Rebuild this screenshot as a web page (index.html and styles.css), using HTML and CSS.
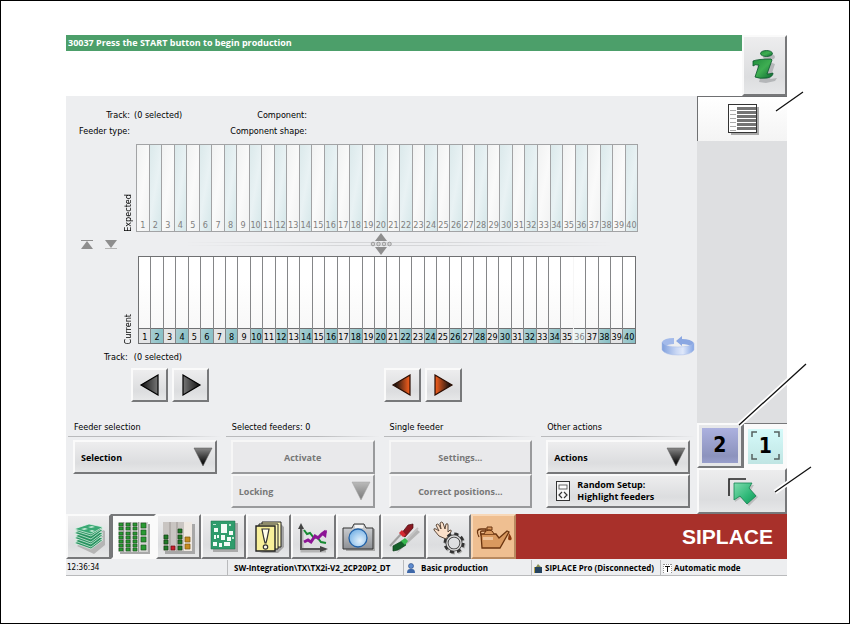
FILE: index.html
```html
<!DOCTYPE html>
<html lang="en">

<head>
    <meta charset="UTF-8">
    <meta name="viewport" content="width=device-width, initial-scale=1.0">
    <title>SIPLACE Station</title>
    <link rel="stylesheet" href="styles.css">
</head>

<body>
    <div class="app">
        <header class="header">
            <div class="message">30037 Press the START button to begin production</div>
            <button class="info-button" aria-label="Information">
                <svg width="44" height="60" viewBox="0 0 44 60">
                    <defs>
                        <linearGradient id="infoGreen" x1="0" y1="0" x2="1" y2="1">
                            <stop offset="0" stop-color="#1f8d3c" />
                            <stop offset="0.5" stop-color="#3fae52" />
                            <stop offset="1" stop-color="#0b6a30" />
                        </linearGradient>
                    </defs>
                    <g fill="#a3a5a8" opacity="0.7" transform="translate(3 3)">
                        <ellipse cx="23" cy="18" rx="6" ry="3.2" />
                        <path d="M11 26l15-2 3 1-5 15 7-1-2 3-9 2-7-1 4-14-5 1z" />
                    </g>
                    <ellipse cx="23.500" cy="17.500" rx="6" ry="3" fill="url(#infoGreen)" stroke="#07552a" stroke-width="0.800" />
                    <path d="M10 25q5-2 18-2l1 1-5 14q3 0 6-1 0 4-6 5-8 1-12-1l4-12q-4-1-6 1z" fill="url(#infoGreen)" stroke="#07552a" stroke-width="0.800" />
                </svg>
            </button>
        </header>

        <div class="middle">
            <main class="content">
                <dl class="details">
                    <dt>Track:</dt>
                    <dd>(0 selected)</dd>
                    <dt>Component:</dt>
                    <dd></dd>
                    <dt>Feeder type:</dt>
                    <dd></dd>
                    <dt>Component shape:</dt>
                    <dd></dd>
                </dl>

                <div class="tracks">
                    <span class="side-label">Expected</span>
                    <div class="slots expected" id="expected"></div>

                    <div class="splitter">
                        <svg class="splitter-ends" width="38" height="12" viewBox="0 0 38 12">
                            <path d="M1 2h12v1H1zM1 11l6-8 6 8z" fill="#8e8e8e" />
                            <path d="M25 2h12l-6 8z" fill="#8e8e8e" />
                            <path d="M25 10h12v1H25z" fill="#b5b5b5" />
                        </svg>
                        <div class="splitter-line"></div>
                        <svg class="splitter-grip" width="22" height="22" viewBox="0 0 22 22">
                            <path d="M11 0l6 8H5zM5 14h12l-6 8z" fill="#8e8e8e" />
                            <g fill="#d4d4d4" stroke="#8e8e8e" stroke-width="0.800">
                                <circle cx="3" cy="11" r="1.800" />
                                <circle cx="8.500" cy="11" r="1.800" />
                                <circle cx="14" cy="11" r="1.800" />
                                <circle cx="19.500" cy="11" r="1.800" />
                            </g>
                        </svg>
                    </div>

                    <span class="side-label">Current</span>
                    <div class="slots current" id="current"></div>

                    <div class="track-status">
                        <span>Track:</span>
                        <span>(0 selected)</span>
                    </div>
                    <svg class="rotate-icon" width="34" height="20" viewBox="0 0 34 20">
                        <defs>
                            <linearGradient id="ring">
                                <stop offset="0" stop-color="#7f9fdc" />
                                <stop offset="0.450" stop-color="#c9d7f4" />
                                <stop offset="0.650" stop-color="#dfe8fa" />
                                <stop offset="1" stop-color="#83a4e4" />
                            </linearGradient>
                        </defs>
                        <path d="M1 6Q3 2 13 2v6Q7 8 3 11z" fill="#a3baea" />
                        <path d="M15 5l6-5v3q9 0 12 4l-2 4q-4-3-10-3v2z" fill="#8aa7e2" />
                        <path d="M1 6q3 5 16 5t16-4v7q-3 5-16 5T1 14z" fill="url(#ring)" stroke="#a9bde8" stroke-width="0.500" />
                    </svg>
                </div>

                <div class="columns">
                    <div class="move-buttons first">
                        <button class="button" aria-label="Previous track">
                            <svg width="22" height="22" viewBox="0 0 22 22">
                                <defs>
                                    <linearGradient id="grayLeft">
                                        <stop offset="0" stop-color="#111" />
                                        <stop offset="1" stop-color="#777" />
                                    </linearGradient>
                                </defs>
                                <path d="M2 11L19 1v20z" fill="url(#grayLeft)" stroke="#000" stroke-width="1.200" />
                            </svg>
                        </button>
                        <button class="button" aria-label="Next track">
                            <svg width="22" height="22" viewBox="0 0 22 22">
                                <defs>
                                    <linearGradient id="grayRight">
                                        <stop offset="0" stop-color="#777" />
                                        <stop offset="1" stop-color="#111" />
                                    </linearGradient>
                                </defs>
                                <path d="M20 11L3 1v20z" fill="url(#grayRight)" stroke="#000" stroke-width="1.200" />
                            </svg>
                        </button>
                    </div>
                    <div class="move-buttons second">
                        <button class="button" aria-label="Previous feeder">
                            <svg width="22" height="22" viewBox="0 0 22 22">
                                <defs>
                                    <linearGradient id="orangeLeft">
                                        <stop offset="0.100" stop-color="#111" />
                                        <stop offset="0.900" stop-color="#e2581c" />
                                    </linearGradient>
                                </defs>
                                <path d="M2 11L19 1v20z" fill="url(#orangeLeft)" stroke="#2a0d02" stroke-width="1.200" />
                            </svg>
                        </button>
                        <button class="button" aria-label="Next feeder">
                            <svg width="22" height="22" viewBox="0 0 22 22">
                                <defs>
                                    <linearGradient id="orangeRight">
                                        <stop offset="0.100" stop-color="#e2581c" />
                                        <stop offset="0.900" stop-color="#111" />
                                    </linearGradient>
                                </defs>
                                <path d="M20 11L3 1v20z" fill="url(#orangeRight)" stroke="#2a0d02" stroke-width="1.200" />
                            </svg>
                        </button>
                    </div>
                </div>

                <div class="columns actions">
                    <section class="group">
                        <h2>Feeder selection</h2>
                        <div class="dropdown">
                            <select class="button" aria-label="Feeder selection">
                                <option>Selection</option>
                            </select>
                            <svg width="20" height="20" viewBox="0 0 20 20">
                                <defs>
                                    <linearGradient id="dropDark" x1="0" y1="0" x2="0" y2="1">
                                        <stop offset="0" stop-color="#888" />
                                        <stop offset="0.800" stop-color="#111" />
                                    </linearGradient>
                                </defs>
                                <path d="M1 1h18l-9 18z" fill="url(#dropDark)" stroke="#555" stroke-width="0.500" />
                            </svg>
                        </div>
                    </section>
                    <section class="group">
                        <h2>Selected feeders: 0</h2>
                        <button class="button" disabled>Activate</button>
                        <div class="dropdown">
                            <select class="button" aria-label="Locking" disabled>
                                <option>Locking</option>
                            </select>
                            <svg width="20" height="20" viewBox="0 0 20 20">
                                <defs>
                                    <linearGradient id="dropLight" x1="0" y1="0" x2="0" y2="1">
                                        <stop offset="0" stop-color="#bbb" />
                                        <stop offset="0.800" stop-color="#858585" />
                                    </linearGradient>
                                </defs>
                                <path d="M1 1h18l-9 18z" fill="url(#dropLight)" stroke="#a0a0a0" stroke-width="0.500" />
                            </svg>
                        </div>
                    </section>
                    <section class="group">
                        <h2>Single feeder</h2>
                        <button class="button" disabled>Settings...</button>
                        <button class="button" disabled>Correct positions...</button>
                    </section>
                    <section class="group">
                        <h2>Other actions</h2>
                        <div class="dropdown">
                            <select class="button" aria-label="Other actions">
                                <option>Actions</option>
                            </select>
                            <svg width="20" height="20" viewBox="0 0 20 20">
                                <path d="M1 1h18l-9 18z" fill="url(#dropDark)" stroke="#555" stroke-width="0.500" />
                            </svg>
                        </div>
                        <button class="button random">
                            <svg width="14" height="20" viewBox="0 0 14 20">
                                <rect x="0.500" y="0.500" width="13" height="19" fill="#f6f6f6" stroke="#333" />
                                <rect x="3" y="4" width="8" height="4" fill="#fff" stroke="#444" stroke-width="0.800" />
                                <path d="M6 11l-3 3 3 3M8 11l3 3-3 3" fill="none" stroke="#333" stroke-width="1.200" />
                            </svg>
                            <span>Random Setup:<br>Highlight feeders</span>
                        </button>
                    </section>
                </div>
            </main>

            <aside class="sidebar">
                <button class="list-button" aria-label="Feeder list">
                    <svg width="32" height="34" viewBox="0 0 32 34">
                        <path d="M4 5h28v28H4z" fill="#aaa" />
                        <rect x="1.500" y="2.500" width="28" height="28" fill="#fff" stroke="#333" />
                        <path d="M10 5h19v3H10zM10 9h19v3H10zM10 13h19v3H10zM10 17h19v3H10zM10 21h19v3H10zM10 25h19v3H10z" fill="#747474" />
                        <path d="M3 8.500h6M3 12.500h6M3 16.500h6M3 20.500h6M3 24.500h6M3 28.500h6" stroke="#aaa" />
                    </svg>
                </button>
                <div class="areas">
                    <button class="area"><span>2</span></button>
                    <button class="area active">
                        <span>1</span>
                        <svg width="35" height="35" viewBox="0 0 35 35">
                            <path d="M4 9V4h5M26 4h5v5M31 26v5h-5M9 31H4v-5" fill="none" stroke="#55605f" stroke-width="1.500" />
                        </svg>
                    </button>
                </div>
                <button class="back-button" aria-label="Back">
                    <svg width="32" height="32" viewBox="0 0 32 32">
                        <defs>
                            <linearGradient id="backGreen" x1="0" y1="0" x2="1" y2="1">
                                <stop offset="0" stop-color="#7fdcae" />
                                <stop offset="0.600" stop-color="#2fb878" />
                                <stop offset="1" stop-color="#12975a" />
                            </linearGradient>
                        </defs>
                        <path d="M3 21V4h17" fill="none" stroke="#222" stroke-width="1.600" />
                        <path d="M10 10h18l-3 5 7 7-9 9-8-8-6 4z" fill="#9a9a9a" opacity="0.500" />
                        <path d="M8 8h18l-3 5 7 8-9 8-7-8-6 4z" fill="url(#backGreen)" stroke="#128450" stroke-width="0.800" />
                    </svg>
                </button>
            </aside>
        </div>

        <nav class="toolbar">
            <button class="tool" aria-label="Board stack">
                <svg viewBox="0 0 45 44">
                    <path d="M11 31l17 8 11-9V16l-4-2z" fill="#b5b5b5" />
                    <g stroke="#eaf6ef" stroke-width="0.700" fill="#27935f">
                        <path d="M8 28l15-6 14 3-12 9z" />
                        <path d="M9 26l15-6 13 3-12 9z" />
                        <path d="M8 23l15-6 14 3-12 9z" />
                        <path d="M9 21l15-6 13 3-12 9z" />
                        <path d="M8 18l15-6 14 3-12 9z" />
                        <path d="M9 16l15-6 13 3-12 8z" />
                        <path d="M8 14l15-5 14 3-12 7z" fill="#3aa874" />
                    </g>
                    <path d="M15 14l4-1 3 1-4 1zM22 12l4-1 3 1-4 1zM23 16l3-1 3 1-3 1z" fill="#c5ead6" />
                </svg>
            </button>
            <button class="tool active" aria-label="Feeders">
                <svg viewBox="0 0 45 44">
                    <path d="M9 9h30v30H9z" fill="#a8a8a8" />
                    <path d="M7 7h30v30H7z" fill="#d3d3d1" />
                    <path d="M12 7h1v30h-1zM19 7h1v30h-1zM27 7h1v30h-1z" fill="#9b9b9b" />
                    <path d="M8 8h4v3H8zM8 12h4v3H8zM8 17h4v3H8zM8 21h4v3H8zM8 25h4v3H8zM8 29h4v3H8zM8 33h4v3H8zM15 8h4v3h-4zM15 12h4v3h-4zM15 17h4v3h-4zM15 21h4v3h-4zM15 25h4v3h-4zM15 29h4v3h-4zM15 33h4v3h-4zM22 8h4v3h-4zM22 12h4v3h-4zM22 17h4v3h-4zM22 21h4v3h-4zM22 25h4v3h-4zM22 29h4v3h-4zM22 33h4v3h-4zM30 8h5v5h-5zM30 15h5v5h-5zM30 22h5v5h-5zM30 30h5v5h-5z" fill="#2a9a33" stroke="#17491b" stroke-width="0.600" />
                </svg>
            </button>
            <button class="tool" aria-label="Fill levels">
                <svg viewBox="0 0 45 44">
                    <path d="M9 9h30v30H9z" fill="#a8a8a8" />
                    <path d="M7 7h29v29H7z" fill="#c9c5c2" />
                    <path d="M13 7h2v29h-2zM20 7h2v29h-2z" fill="#b3aeab" />
                    <path d="M28 7h8v29h-8z" fill="#eee8e2" />
                    <path d="M8 20h4v4H8zM8 25h4v4H8zM8 31h4v4H8zM22 14h4v4h-4zM22 20h4v4h-4zM22 25h4v4h-4zM22 31h4v4h-4z" fill="#1f7a26" stroke="#123f16" stroke-width="0.700" />
                    <path d="M15 31h4v4h-4z" fill="#c8202c" stroke="#6b0d14" stroke-width="0.700" />
                    <path d="M29 22h5v5h-5zM29 29h5v5h-5z" fill="#c48a1e" stroke="#7d560c" stroke-width="0.700" />
                </svg>
            </button>
            <button class="tool" aria-label="Board">
                <svg viewBox="0 0 45 44">
                    <path d="M12 8h25v29H12z" fill="#aaa" />
                    <path d="M10 6h24v28H10z" fill="#2f9c6c" stroke="#1f6f4b" stroke-width="0.500" />
                    <path d="M20 9h6v9h-6zM13 13h4v4h-4zM28 16h4v4h-4zM13 20h2v4h-2zM16 20h2v3h-2zM20 20h4v5h-4zM26 22h4v4h-4zM12 27h4v4h-4zM18 28h3v4h-3zM23 27h6v4h-6z" fill="#f2fbf6" />
                    <path d="M28 9h2v2h-2zM12 9h3v1h-3zM31 22h2v2h-2z" fill="#bfe4d1" />
                </svg>
            </button>
            <button class="tool" aria-label="Messages">
                <svg viewBox="0 0 45 44">
                    <path d="M13 38h19l6-6V12l-3-3v22z" fill="#a5a5a5" />
                    <path d="M16 7h19v25H16z" fill="#fbf6b4" stroke="#222" />
                    <path d="M13 9h19v25H13z" fill="#fbf6b4" stroke="#222" />
                    <path d="M10 11h19v25H10z" fill="#f8f09a" stroke="#222" stroke-width="1.400" />
                    <path d="M16 14h7l-2 10-1 4h-1l-1-4z" fill="#fffde9" stroke="#333" stroke-width="1.200" />
                    <circle cx="19.500" cy="32" r="2.200" fill="#fffde9" stroke="#333" stroke-width="1.200" />
                </svg>
            </button>
            <button class="tool" aria-label="Statistics">
                <svg viewBox="0 0 45 44">
                    <path d="M11 12v24h24" fill="none" stroke="#b5b5b5" stroke-width="3" />
                    <path d="M10 12v22h20" fill="none" stroke="#555" stroke-width="2" />
                    <path d="M7 14l3-6 3 6zM29 31l8 3-8 3z" fill="#444" />
                    <path d="M13 15l3 4 3-1 4 5 3-1 4 5 5 1" fill="none" stroke="#178a32" stroke-width="2" />
                    <path d="M13 27l4-2 3 2 4-6 3 2 4-4 4-3" fill="none" stroke="#8d1596" stroke-width="3" />
                    <path d="M30 19l6-4-1 8z" fill="#8d1596" />
                </svg>
            </button>
            <button class="tool" aria-label="Camera">
                <svg viewBox="0 0 45 44">
                    <defs>
                        <radialGradient id="lens" cx="0.600" cy="0.650" r="0.700">
                            <stop offset="0" stop-color="#e2f1fc" />
                            <stop offset="1" stop-color="#75b1e6" />
                        </radialGradient>
                        <linearGradient id="cameraBody" x1="0" y1="0" x2="0" y2="1">
                            <stop offset="0" stop-color="#d5d7da" />
                            <stop offset="1" stop-color="#8d9095" />
                        </linearGradient>
                    </defs>
                    <path d="M10 14h29v22H10z" fill="#aaa" />
                    <path d="M7 13h9l2-4h10l2 4h7v21H7z" fill="url(#cameraBody)" stroke="#333" />
                    <path d="M19 10h8v3h-8z" fill="#f6f6f6" />
                    <circle cx="22" cy="23" r="9" fill="url(#lens)" stroke="#2262a8" stroke-width="1.300" />
                </svg>
            </button>
            <button class="tool" aria-label="Tools">
                <svg viewBox="0 0 45 44">
                    <path d="M15 39l24-22-4-3z" fill="#b5b5b5" />
                    <path d="M9 31l12-13" stroke="#a0a0a0" stroke-width="2" />
                    <path d="M24 26l13-13" stroke="#c4c4c4" stroke-width="2" />
                    <path d="M20 19l7-9 5-1v4l-8 9z" fill="#8b1a22" stroke="#4a0b10" stroke-width="0.700" />
                    <path d="M18 18l3-3 4 5-3 2z" fill="#d42a32" />
                    <path d="M12 31l9-5 4 4-8 5-5 1z" fill="#14602a" stroke="#0b3c19" stroke-width="0.700" />
                    <path d="M20 26l4-3 3 3-3 4z" fill="#37b84d" />
                </svg>
            </button>
            <button class="tool" aria-label="Manual settings">
                <svg viewBox="0 0 45 44">
                    <path d="M13 21l-5-6q-1-2 2-1l3 2-3-6q1-2 3 0l2 4-1-6q2-2 3 0l2 6 1-5q2-1 2 1v7l2-2q2 0 1 2l-5 7z" fill="#fbe0c9" stroke="#4d3a2c" stroke-width="0.900" />
                    <circle cx="29" cy="29" r="9" fill="none" stroke="#aaa" stroke-width="3" stroke-dasharray="4 3" />
                    <circle cx="28" cy="28" r="9" fill="none" stroke="#333" stroke-width="3" stroke-dasharray="4 3.070" />
                    <circle cx="28" cy="28" r="7" fill="none" stroke="#333" stroke-width="3" />
                    <circle cx="28" cy="28" r="7" fill="none" stroke="#d8d8d8" stroke-width="1.400" />
                </svg>
            </button>
            <button class="tool oil" aria-label="Maintenance">
                <svg viewBox="0 0 45 44">
                    <path d="M8 22q-4-8 2-8h5v2h-4q-3 0 0 6" fill="none" stroke="#6b3510" stroke-width="1.300" />
                    <path d="M10 19h15l3 4 8-7 2 1-9 16H11z" fill="#d9995f" stroke="#6b3510" stroke-width="1.300" />
                    <path d="M13 19q1-4 5-4t5 4M16 12h5v3h-5z" fill="#d9995f" stroke="#6b3510" />
                    <path d="M12 22h10v3H12z" fill="#eec39a" />
                    <path d="M38 18q4 6 2 7t-3-1z" fill="#8a3a10" />
                </svg>
            </button>
            <div class="brand">SIPLACE</div>
        </nav>

        <footer class="status">
            <span class="time">12:36:34</span>
            <span></span>
            <span class="field path">SW-Integration\TX\TX2i-V2_2CP20P2_DT</span>
            <span class="field user">
                <svg width="10" height="10" viewBox="0 0 10 10">
                    <path d="M1 10q0-4 3-4h2q3 0 3 4z" fill="#3d67a8" />
                    <circle cx="5" cy="3" r="2.500" fill="#5f8cd0" stroke="#27477d" stroke-width="0.600" />
                </svg>
                Basic production
            </span>
            <span class="field">
                <svg width="9" height="9" viewBox="0 0 9 9">
                    <path d="M1 3h7v6H1z" fill="#25435f" />
                    <path d="M4 0l3 3H2z" fill="#8a8f52" />
                    <path d="M0 3h1v6H0z" fill="#b9a34a" />
                </svg>
                SIPLACE Pro (Disconnected)
            </span>
            <span class="field">
                <svg width="9" height="9" viewBox="0 0 9 9">
                    <path d="M0 0h9v9H0z" fill="#fff" />
                    <path d="M0 9V0h9v9" fill="none" stroke="#222" stroke-dasharray="1 1" />
                    <path d="M2 2h5v1H5v5H4V3H2z" fill="#111" />
                </svg>
                Automatic mode
            </span>
        </footer>

        <svg class="callouts" width="80" height="480" viewBox="0 0 80 480">
            <g stroke="#fff" stroke-width="5">
                <path d="M41 76l27-19M4 390l67-61M40 457l36-25" />
            </g>
            <g stroke="#111" stroke-width="1.300">
                <path d="M41 76l27-19M4 390l67-61M40 457l36-25" />
            </g>
        </svg>
    </div>

    <script>
        const SLOT_COUNT = 40;

        function fillSlots(id) {
            const row = document.getElementById(id);
            for (let i = 1; i <= SLOT_COUNT; i++) {
                const slot = document.createElement("div");
                const number = document.createElement("span");
                slot.className = "slot";
                // 35 and 36 share one double-width feeder
                if (id === "current" && i === 36) {
                    slot.classList.add("covered");
                }
                number.textContent = i;
                slot.appendChild(number);
                row.appendChild(slot);
            }
        }

        fillSlots("expected");
        fillSlots("current");
    </script>
</body>

</html>
```

FILE: styles.css
```css
* {
    box-sizing: border-box;
}

body {
    margin: 0;
    padding: 34px 62px 47px 65px;
    min-height: 100vh;
    border: 1px solid #000;
    background-color: #fff;
    color: #000;
    font-family: "DejaVu Sans Condensed", "DejaVu Sans", sans-serif;
    font-size: 9px;
    line-height: 12px;
    display: flex;
}

.app {
    position: relative;
    flex: 1;
    min-width: 0;
    display: flex;
    flex-direction: column;
}

svg {
    display: block;
    flex-shrink: 0;
}

button,
select {
    font-family: "Open Sans", sans-serif;
    font-size: 9px;
    font-weight: bold;
    line-height: 11px;
    color: #000;
    margin: 0;
    padding: 0;
    border: 2px solid;
    border-color: #fafafa #77787a #77787a #fafafa;
    border-radius: 0;
    background: linear-gradient(#ededee, #dcdddf 70%, #e6e7e8);
}

/* header */

.header {
    display: flex;
    align-items: flex-start;
}

.message {
    flex: 1;
    height: 16px;
    padding: 0 2px;
    background-color: #4c9f6a;
    color: #fff;
    font-family: "Open Sans", sans-serif;
    font-weight: bold;
    line-height: 16px;
}

.info-button {
    width: 45px;
    height: 61px;
    display: flex;
    align-items: center;
    justify-content: center;
}

/* main area */

.middle {
    flex: 1;
    display: flex;
}

.content {
    flex: 1;
    display: flex;
    flex-direction: column;
    background-color: #edeef0;
}

.details {
    display: grid;
    grid-template-columns: 64px 81px 88px 1fr;
    row-gap: 4px;
    column-gap: 4px;
    margin: 0;
    padding: 13px 0 7px;
    white-space: nowrap;
}

.details dt {
    text-align: right;
}

.details dd {
    margin: 0;
    height: 12px;
}

.tracks {
    display: grid;
    grid-template-columns: 70px 1fr 59px;
}

.side-label {
    justify-self: end;
    align-self: end;
    writing-mode: vertical-rl;
    transform: rotate(180deg);
    margin-right: 2px;
}

.slots {
    display: flex;
    height: 88px;
    border: 1px solid #a2a3a5;
}

.slot {
    flex: 1;
    min-width: 0;
    display: flex;
    flex-direction: column;
    justify-content: flex-end;
    border-left: 1px solid #a2a3a5;
    text-align: center;
}

.slot:first-child {
    border-left: 0;
}

.slot span {
    display: flex;
    justify-content: center;
}

.expected .slot {
    background: linear-gradient(100deg, #f1f2f2, #fafafa 50%, #f1f2f2);
    color: #808080;
}

.expected .slot:nth-child(even) {
    background: linear-gradient(100deg, #dbe9eb, #e9f2f4 50%, #d5e7e9);
}

.current {
    margin: 0 2px;
    border-color: #6f7072;
}

.current .slot {
    border-color: #858688;
    background: linear-gradient(#fff, #fff 25%, #f6f6f6);
}

.current .slot span {
    height: 15px;
    border-top: 1px solid #6f7072;
    background-color: #e3e4e5;
    line-height: 16px;
}

.current .slot:nth-child(even) span {
    background: linear-gradient(100deg, #a9cdd1, #86bfc5);
}

.current .slot.covered {
    border-color: #f6f6f6;
}

.current .slot.covered span {
    background: #e9f3f4;
    color: #808080;
}

.splitter {
    grid-column: 1 / -1;
    position: relative;
    display: flex;
    align-items: center;
    height: 24px;
    padding: 0 59px 0 14px;
}

.splitter-line {
    flex: 1;
    height: 4px;
    margin-left: 18px;
    border: solid #d5d6d8;
    border-width: 1px 0;
    -webkit-mask-image: linear-gradient(90deg, transparent 10%, #000 40%, #000 60%, transparent 95%);
    mask-image: linear-gradient(90deg, transparent 10%, #000 40%, #000 60%, transparent 95%);
}

.splitter-grip {
    position: absolute;
    top: 1px;
    left: calc(50% - 12px);
}

.track-status {
    grid-column: 1 / 3;
    display: flex;
    gap: 6px;
    height: 24px;
    padding: 7px 0 0 38px;
}

.rotate-icon {
    grid-column: 3;
    grid-row: 3 / 5;
    align-self: end;
    justify-self: end;
    margin: 0 2px 12px 0;
}

.columns {
    display: grid;
    grid-template-columns: repeat(4, 1fr);
}

.move-buttons {
    display: flex;
    gap: 4px;
}

.move-buttons .button {
    width: 37px;
    height: 34px;
    flex-shrink: 0;
    display: flex;
    align-items: center;
    justify-content: center;
}

.move-buttons.first {
    padding-left: 65px;
}

.move-buttons.second {
    grid-column: 3;
    padding-left: 2px;
}

.actions {
    padding-top: 19px;
}

.group {
    display: flex;
    flex-direction: column;
    padding: 0 7px;
}

.group h2 {
    margin: 0 -4px 3px -5px;
    padding: 0 0 3px 6px;
    border-bottom: 1px solid;
    border-image: linear-gradient(90deg, #b9babc 60%, #edeef0) 1;
    font-size: 9px;
    font-weight: normal;
    line-height: 12px;
}

.group .button {
    width: 100%;
    height: 34px;
}

.button:disabled {
    border-color: #f6f6f6 #999a9c #999a9c #f6f6f6;
    background: #e9e9eb;
    color: #777;
    opacity: 1;
}

.dropdown {
    position: relative;
}

.dropdown select {
    display: block;
    appearance: none;
    padding-left: 6px;
}

.dropdown svg {
    position: absolute;
    top: 7px;
    right: 4px;
    pointer-events: none;
}

.random {
    display: flex;
    align-items: center;
    gap: 7px;
    padding-left: 8px;
    text-align: left;
}

.random span {
    line-height: 12px;
}

/* sidebar */

.sidebar {
    width: 90px;
    display: flex;
    flex-direction: column;
    background-color: #dedfe1;
}

.list-button {
    height: 45px;
    display: flex;
    align-items: center;
    justify-content: center;
    border-width: 1px 0 0 1px;
    border-color: #6f7072;
    background: linear-gradient(#fff, #f4f4f4);
}

.areas {
    display: flex;
    margin-top: auto;
}

.area {
    position: relative;
    flex: 1;
    height: 45px;
    padding: 3px;
    background: #e6e7e9;
    font-family: "DejaVu Sans Condensed", "DejaVu Sans", sans-serif;
}

.area span {
    display: block;
    background: linear-gradient(#acb1df, #8c93bd 80%, #999fcc);
    font-size: 21px;
    line-height: 35px;
}

.area.active {
    border-width: 1px 0 0 1px;
    border-color: #77787a;
    background: #fafafa;
    padding: 4px;
}

.area.active span {
    background: linear-gradient(#d5fafa, #c0e5e3);
}

.area svg {
    position: absolute;
    top: 4px;
    left: calc(50% - 17px);
}

.back-button {
    height: 46px;
    display: flex;
    align-items: center;
    justify-content: center;
}

/* toolbar */

.toolbar {
    display: flex;
    height: 45px;
}

.tool {
    width: 45px;
    height: 45px;
    flex-shrink: 0;
    overflow: hidden;
}

.tool svg {
    width: 45px;
    height: 44px;
    margin: -2px;
}

.tool.active {
    border-color: #77787a #fafafa #fafafa #77787a;
    background: #fafafa;
}

.tool.oil {
    border-color: #f8d8b8 #b98a60 #b98a60 #f8d8b8;
    background: #efbf91;
}

.brand {
    flex: 1;
    padding-right: 14px;
    background-color: #a8302a;
    color: #fff;
    font-family: "Liberation Sans", Arial, sans-serif;
    font-size: 21px;
    font-weight: bold;
    line-height: 45px;
    text-align: right;
}

/* status bar */

.status {
    display: grid;
    grid-template-columns: 32fr 129fr 176fr 128fr 129fr 127fr;
    height: 17px;
    padding-top: 1px;
    border-bottom: 1px solid #b9babc;
    background-color: #edeef0;
    font-size: 8px;
    line-height: 16px;
    white-space: nowrap;
}

.status > * {
    min-width: 0;
}

.time {
    padding-left: 1px;
}

.field {
    display: flex;
    align-items: center;
    gap: 2px;
    padding-left: 2px;
    border-left: 1px solid #b9babc;
    font-family: "Open Sans", sans-serif;
    font-weight: bold;
}

.path {
    padding-left: 6px;
}

.user {
    gap: 5px;
}

.callouts {
    position: absolute;
    top: 0;
    right: -28px;
    pointer-events: none;
}
```
